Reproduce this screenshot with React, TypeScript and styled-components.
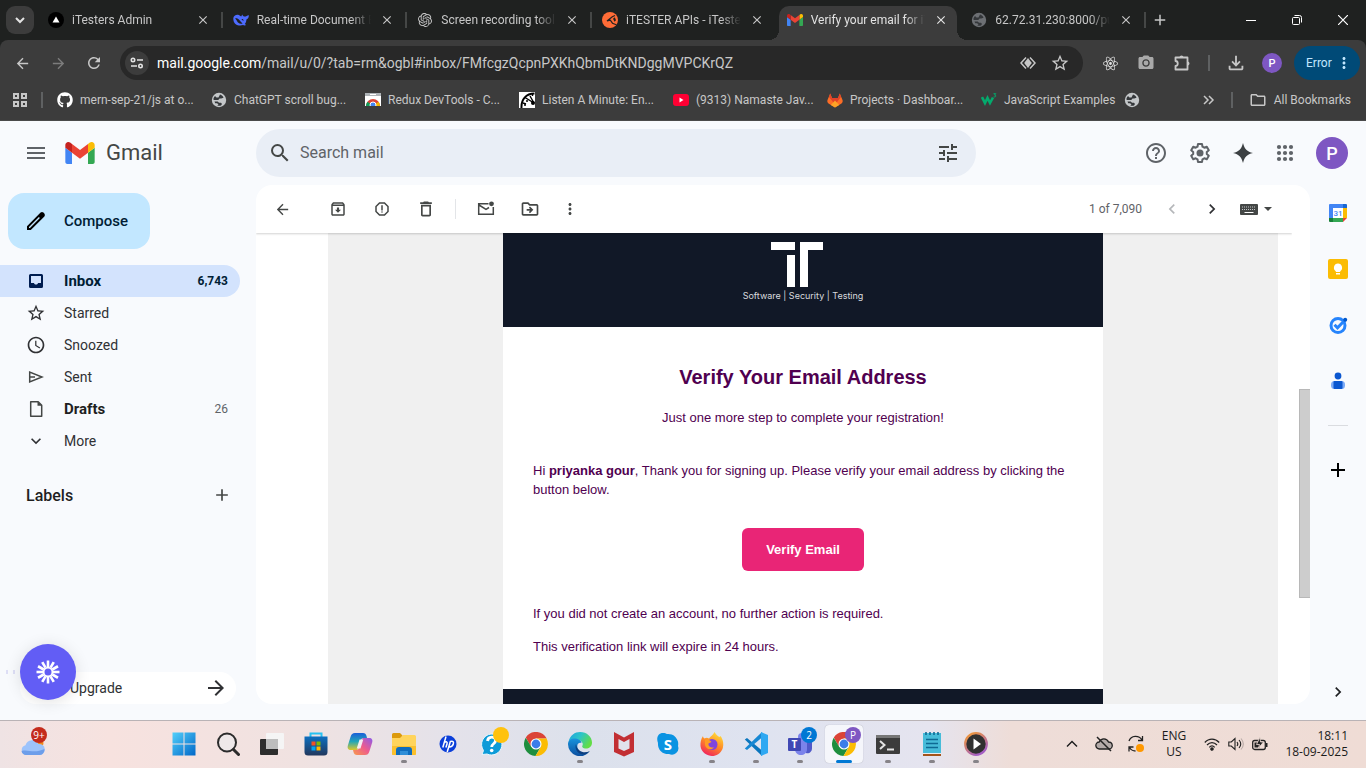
import React from 'react';
import styled, { createGlobalStyle, css } from 'styled-components';
import {
  MdAccessTime, MdAdd, MdArrowBack, MdArrowForward, MdChevronLeft,
  MdChevronRight, MdClose, MdDeleteOutline, MdExpandMore, MdHelpOutline,
  MdMenu, MdMoreVert, MdOutlineArchive, MdOutlineDriveFileMove, MdOutlineFileDownload,
  MdOutlineFolder, MdOutlineReport, MdRefresh, MdSearch,
  MdStarOutline, MdTune, MdPhotoCamera,
} from 'react-icons/md';
import { FaGithub } from 'react-icons/fa';
import { SiOpenai, SiReact } from 'react-icons/si';

const chromeFont = `Roboto, "Open Sans", sans-serif`;
const taskbarFont = `"Open Sans", "Noto Sans", sans-serif`;
const mailFont = `Roboto, Inter, sans-serif`;

const GlobalStyle = createGlobalStyle`
  * { box-sizing: border-box; }
  html, body { margin: 0; padding: 0; }
  body { font-family: ${mailFont}; overflow: hidden; }
  button { border: 0; padding: 0; margin: 0; background: none; font: inherit; color: inherit; cursor: pointer; }
  a { color: inherit; text-decoration: none; }
  svg { display: block; flex: none; }
`;

const Screen = styled.div`
  display: flex;
  flex-direction: column;
  height: 100vh;
`;

/* ---------- browser ---------- */

const Browser = styled.header`
  background: #1f2120;
  color: #c7c7c7;
  font-family: ${chromeFont};
  font-size: 12px;
  flex: none;
`;

const TabStrip = styled.div`
  display: flex;
  height: 40px;
  align-items: flex-start;
`;

const TabSearch = styled.button`
  display: grid;
  place-items: center;
  flex: none;
  width: 28px;
  height: 28px;
  margin: 6px;
  border-radius: 9px;
  background: #3c3c3c;
  color: #e3e3e3;
`;

const Tabs = styled.div`
  display: flex;
  gap: 6px;
  flex: 0 1 1102px;
  min-width: 0;
  height: 34px;
  margin-top: 6px;
`;

const TabBox = styled.div<{ $active?: boolean; $divider?: boolean }>`
  position: relative;
  display: flex;
  align-items: center;
  gap: 8px;
  flex: 1 1 0;
  min-width: 0;
  padding: 0 8px 6px;
  ${(p) => p.$divider && css`
    &::after {
      content: '';
      position: absolute;
      right: -4px;
      top: 6px;
      width: 2px;
      height: 16px;
      background: #454746;
    }
  `}
  ${(p) => p.$active && css`
    background: #3c3c3c;
    border-radius: 10px 10px 0 0;
    color: #e3e3e3;
    &::before, &::after {
      content: '';
      position: absolute;
      bottom: 0;
      width: 10px;
      height: 10px;
    }
    &::before { left: -10px; background: radial-gradient(circle at 0 0, transparent 10px, #3c3c3c 10px); }
    &::after { right: -10px; background: radial-gradient(circle at 100% 0, transparent 10px, #3c3c3c 10px); }
  `}
`;

const TabIcon = styled.span`
  display: grid;
  place-items: center;
  flex: none;
  width: 16px;
  height: 16px;
`;

const TabTitle = styled.span`
  flex: 1;
  min-width: 0;
  overflow: hidden;
  white-space: nowrap;
  line-height: 16px;
  mask-image: linear-gradient(to right, #000 calc(100% - 20px), transparent);
`;

const IconButton = styled.button<{ $w?: number; $h?: number }>`
  display: grid;
  place-items: center;
  flex: none;
  width: ${(p) => p.$w ?? 28}px;
  height: ${(p) => p.$h ?? 28}px;
`;

const WindowControls = styled.div`
  display: flex;
  margin-left: auto;
  color: #fff;
`;

const Toolbar = styled.div`
  background: #3c3c3c;
  border-radius: 8px 8px 0 0;
  border-bottom: 1px solid #4a4a4a;
`;

const AddressRow = styled.div`
  display: flex;
  align-items: center;
  gap: 8px;
  height: 46px;
  padding: 0 6px 0 8px;
`;

const AddressBar = styled.div`
  display: flex;
  align-items: center;
  flex: 1;
  min-width: 0;
  height: 34px;
  margin: 0 5px 0 4px;
  padding: 0 9px 0 5px;
  border-radius: 17px;
  background: #282828;
`;

const SiteInfo = styled.button`
  display: grid;
  place-items: center;
  width: 24px;
  height: 24px;
  border-radius: 50%;
  background: #3c3c3c;
  color: #e3e3e3;
`;

const Url = styled.a`
  flex: 1;
  min-width: 0;
  margin-left: 8px;
  overflow: hidden;
  white-space: nowrap;
  font-size: 14px;
  line-height: 20px;
  b { font-weight: 400; color: #fff; }
`;

const VRule = styled.span<{ $gap?: number }>`
  flex: none;
  width: 2px;
  height: 16px;
  margin: 0 ${(p) => p.$gap ?? 0}px;
  background: #5f6162;
`;

const Initial = styled.span<{ $size: number; $font: number }>`
  display: grid;
  place-items: center;
  width: ${(p) => p.$size}px;
  height: ${(p) => p.$size}px;
  border-radius: 50%;
  background: #7e57c2;
  color: #fff;
  font: 500 ${(p) => p.$font}px Roboto, sans-serif;
`;

const ErrorButton = styled.button`
  display: flex;
  align-items: center;
  justify-content: space-between;
  flex: none;
  width: 66px;
  height: 34px;
  padding: 0 7px 0 12px;
  border-radius: 17px;
  background: #004a77;
  color: #c2e7ff;
`;

const BookmarkRow = styled.nav`
  display: flex;
  align-items: center;
  height: 34px;
  padding: 0 15px 6px 13px;
`;

const BookmarkList = styled.div`
  display: flex;
  gap: 16px;
`;

const Bookmark = styled.a<{ $w?: number }>`
  display: flex;
  align-items: center;
  gap: 7px;
  width: ${(p) => (p.$w ? `${p.$w}px` : 'auto')};
  white-space: nowrap;
  line-height: 16px;
`;

const BookmarkEnd = styled.div`
  display: flex;
  align-items: center;
  gap: 16px;
  margin-left: auto;
`;

/* ---------- mail ---------- */

const Mail = styled.div`
  position: relative;
  display: flex;
  flex-direction: column;
  flex: 1;
  min-height: 0;
  background: #f8fafd;
  color: #444746;
`;

const MailHeader = styled.header`
  display: flex;
  align-items: center;
  flex: none;
  height: 64px;
  padding-right: 9px;
`;

const Brand = styled.div`
  display: flex;
  align-items: center;
  flex: none;
  width: 256px;
  padding-left: 22px;
`;

const Wordmark = styled.a`
  display: flex;
  align-items: center;
  gap: 11px;
  margin-left: 15px;
  font-size: 22px;
  line-height: 28px;
`;

const SearchBox = styled.form`
  display: flex;
  align-items: center;
  flex: 0 1 720px;
  height: 48px;
  padding: 0 14px 0 10px;
  border-radius: 24px;
  background: #e9eef6;
`;

const SearchInput = styled.input`
  flex: 1;
  min-width: 0;
  margin-left: 6px;
  padding: 0;
  border: 0;
  outline: 0;
  background: none;
  font: 400 16px/24px ${mailFont};
  &::placeholder { color: #5f6368; opacity: 1; }
`;

const HeaderActions = styled.div`
  display: flex;
  align-items: center;
  gap: 2px;
  margin-left: auto;
  color: #5f6368;
`;

const MailBody = styled.div`
  display: flex;
  flex: 1;
  min-height: 0;
  padding-bottom: 16px;
`;

const Sidebar = styled.aside`
  display: flex;
  flex-direction: column;
  flex: none;
  width: 256px;
  padding-top: 8px;
`;

const Compose = styled.button`
  display: flex;
  align-items: center;
  gap: 16px;
  width: 142px;
  height: 56px;
  margin: 0 0 16px 8px;
  padding-left: 16px;
  border-radius: 16px;
  background: #c2e7ff;
  color: #001d35;
  font-size: 15px;
  font-weight: 500;
`;

const Folder = styled.a<{ $active?: boolean; $bold?: boolean }>`
  display: flex;
  align-items: center;
  gap: 18px;
  width: 240px;
  height: 32px;
  padding: 0 12px 0 26px;
  border-radius: 0 16px 16px 0;
  background: ${(p) => (p.$active ? '#d3e3fd' : 'transparent')};
  color: ${(p) => (p.$active ? '#001d35' : p.$bold ? '#1f1f1f' : '#303134')};
  font-size: ${(p) => (p.$active || p.$bold ? 15 : 14)}px;
  font-weight: ${(p) => (p.$active || p.$bold ? 700 : 400)};
  line-height: 20px;
`;

const FolderName = styled.span`flex: 1;`;

const Count = styled.span<{ $strong?: boolean }>`
  font-size: 12px;
  font-weight: ${(p) => (p.$strong ? 700 : 400)};
  color: ${(p) => (p.$strong ? '#001d35' : '#5f6368')};
`;

const LabelsHead = styled.div`
  display: flex;
  align-items: center;
  justify-content: space-between;
  width: 240px;
  height: 40px;
  margin-top: 18px;
  padding: 0 8px 0 26px;
  h2 { margin: 0; color: #1f1f1f; font-size: 16px; font-weight: 500; }
`;

const Upgrade = styled.button`
  display: flex;
  align-items: center;
  justify-content: space-between;
  width: 216px;
  height: 32px;
  margin: auto 0 0 20px;
  padding: 0 8px 0 50px;
  border-radius: 16px;
  background: #fff;
  color: #303134;
  font-size: 14px;
`;

const Recorder = styled.button`
  position: absolute;
  left: 20px;
  bottom: 20px;
  display: grid;
  place-items: center;
  width: 56px;
  height: 56px;
  border-radius: 50%;
  background: #625df5;
  color: #fff;
  box-shadow: 0 2px 16px rgba(0, 0, 0, 0.12);
`;

const Grip = styled.div`
  position: absolute;
  left: 6px;
  bottom: 46px;
  display: flex;
  gap: 5px;
  i { width: 2px; height: 4px; background: #dedff6; }
`;

const Conversation = styled.main`
  display: flex;
  flex-direction: column;
  flex: 1;
  min-width: 0;
  overflow: hidden;
  border-radius: 16px;
  background: #fff;
`;

const MessageBar = styled.div`
  display: flex;
  align-items: center;
  flex: none;
  height: 48px;
  margin-right: 18px;
  padding: 0 20px 0 12px;
  box-shadow: 0 1px 2px rgba(0, 0, 0, 0.18);
  clip-path: inset(0 0 -4px 0);
  z-index: 1;
`;

const ActionGroup = styled.div<{ $ml?: number }>`
  display: flex;
  gap: 16px;
  margin-left: ${(p) => p.$ml ?? 0}px;
`;

const BarRule = styled.span`
  width: 1px;
  height: 20px;
  margin-left: 15px;
  background: #e3e5e8;
`;

const Pager = styled.div`
  display: flex;
  align-items: center;
  margin-left: auto;
  color: #5f6368;
  font-size: 12px;
`;

const InputTools = styled.button`
  display: flex;
  align-items: center;
  gap: 6px;
  height: 28px;
  margin-left: 14px;
  color: #444746;
`;

const MessagePane = styled.div`
  display: flex;
  flex: 1;
  min-height: 0;
  padding-left: 72px;
`;

const MessageCanvas = styled.div`
  display: flex;
  justify-content: center;
  flex: 1;
  min-width: 0;
  overflow: hidden;
  background: #f0f0f0;
`;

const ScrollTrack = styled.div`
  display: flex;
  justify-content: flex-end;
  width: 32px;
  padding-top: 156px;
`;

const ScrollThumb = styled.div`
  width: 11px;
  height: 209px;
  border: 1px solid #b8b8b8;
  border-right: 0;
  background: #cdcdcd;
`;

const Letter = styled.article`
  display: flex;
  flex-direction: column;
  width: 600px;
  background: #fff;
  color: #500050;
  font: 13px/19px "Liberation Sans", Arial, sans-serif;
`;

const Banner = styled.div`
  display: flex;
  flex-direction: column;
  align-items: center;
  flex: none;
  height: 94px;
  padding-top: 8px;
  background: #111827;
  color: #d8dade;
  font: 9px/14px Inter, sans-serif;
  svg { margin: 0 12px 2px 0; }
`;

const LetterBody = styled.div`
  flex: none;
  height: 362px;
  padding: 38px 30px 0;
  h1 { margin: 0 0 19px; font-size: 20px; line-height: 24px; text-align: center; }
  p { margin: 0 0 14px; }
`;

const Lead = styled.p`text-align: center;`;

const Greeting = styled.p`padding-top: 20px;`;

const VerifyLink = styled.a`
  display: block;
  width: 122px;
  margin: 29px auto 33px;
  padding: 12px 0;
  border-radius: 6px;
  background: #e92576;
  color: #fff;
  font-weight: 700;
  text-align: center;
`;

const LetterFooter = styled.div`
  flex: 1 0 200px;
  background: #111827;
`;

const AddonRail = styled.aside`
  display: flex;
  flex-direction: column;
  align-items: center;
  flex: none;
  width: 56px;
`;

const RailRule = styled.span`
  width: 20px;
  height: 1px;
  margin: 16px 0;
  background: #dadce0;
`;

const AddonButton = styled(IconButton)`
  width: 56px;
  height: 56px;
`;

const RailToggle = styled(IconButton)`
  height: 24px;
  margin-top: auto;
  color: #202124;
`;

/* ---------- task bar ---------- */

const Taskbar = styled.footer`
  display: flex;
  align-items: center;
  flex: none;
  height: 48px;
  padding-bottom: 2px;
  border-top: 1px solid #b9b3b6;
  background: linear-gradient(90deg, #efe3e4 0, #f7e2df 8%, #f0e2e1 22%, #e4e2ea 33%, #dce1ec 43%, #dfe3f0 56%, #e5e4ef 68%, #eeddd8 74%, #efdcd5 100%);
  color: #1b1b1b;
  font-family: ${taskbarFont};
  font-size: 12px;
  line-height: 16px;
`;

const Widgets = styled.div`
  flex: none;
  width: 162px;
  padding-left: 19px;
`;

const Apps = styled.div`
  display: flex;
  flex: none;
`;

const AppButton = styled.button<{ $state?: 'open' | 'active' }>`
  position: relative;
  display: grid;
  place-items: center;
  width: 44px;
  height: 45px;
  svg { position: relative; }
  ${(p) => p.$state === 'active' && css`
    &::before {
      content: '';
      position: absolute;
      inset: 4px 3px 3px;
      border-radius: 4px;
      background: #f5f6fb;
      box-shadow: 0 0 1px rgba(0, 0, 0, 0.3);
    }
  `}
  ${(p) => p.$state && css`
    &::after {
      content: '';
      position: absolute;
      bottom: 3px;
      left: 50%;
      width: ${p.$state === 'active' ? 16 : 6}px;
      height: 3px;
      border-radius: 2px;
      transform: translateX(-50%);
      background: ${p.$state === 'active' ? '#0078d4' : '#868388'};
    }
  `}
`;

const Badge = styled.span<{ $bg: string; $right?: number }>`
  position: absolute;
  top: 6px;
  right: ${(p) => p.$right ?? 5}px;
  display: grid;
  place-items: center;
  width: 16px;
  height: 16px;
  border-radius: 50%;
  background: ${(p) => p.$bg};
  color: #fff;
  font-size: 10px;
  line-height: 16px;
`;

const Weather = styled.button`
  position: relative;
  display: grid;
  place-items: center;
  width: 28px;
  height: 45px;
`;

const Tray = styled.div`
  display: flex;
  align-items: center;
  margin-left: auto;
  padding-right: 18px;
`;

const TrayText = styled.span<{ $align: string; $w: number }>`
  width: ${(p) => p.$w}px;
  text-align: ${(p) => p.$align};
`;

/* ---------- drawings ---------- */

const GmailMark = ({ w, h }: { w: number; h: number }) => (
  <svg width={w} height={h} viewBox="52 42 88 66" aria-hidden="true">
    <path fill="#4285f4" d="M58 108h14V74L52 59v43c0 3.320 2.690 6 6 6" />
    <path fill="#34a853" d="M120 108h14c3.320 0 6-2.690 6-6V59l-20 15" />
    <path fill="#fbbc04" d="M120 48v26l20-15v-8c0-7.420-8.470-11.650-14.400-7.200" />
    <path fill="#ea4335" d="M72 74V48l24 18 24-18v26L96 92" />
    <path fill="#c5221f" d="M52 51v8l20 15V48l-5.600-4.200c-5.940-4.450-14.400-.22-14.400 7.200" />
  </svg>
);

const Globe = ({ dim }: { dim?: boolean }) => (
  <svg width="16" height="16" viewBox="0 0 16 16" aria-hidden="true">
    <circle cx="8" cy="8" r="7.200" fill={dim ? '#6d7074' : '#c4c7c9'} />
    <path fill="#34373a" d="M9 2.500c1.700.4 3 1.600 3.500 3.200L10.200 6.500H8.500L7.300 8H3L2.300 7.200A6 6 0 0 1 4 4l1.500 1.500h2zM3.500 9.500h3.200l1.300 1.300h2l1 1.200-1 1.600c-1.300.4-2.700.3-3.700-.1l1.200-1.200-1.500-1H4.200z" />
  </svg>
);

const AppsMark = () => (
  <svg width="14" height="14" viewBox="0 0 14 14" fill="none" stroke="#c7c7c7" strokeWidth="2" aria-hidden="true">
    <path d="M1 1h4v4H1zM9 1h4v4H9zM1 9h4v4H1zM9 9h4v4H9z" />
  </svg>
);

const GridDots = () => (
  <svg width="18" height="18" viewBox="0 0 18 18" fill="#5f6368" aria-hidden="true">
    {[3, 9, 15].map((y) => [3, 9, 15].map((x) => <circle key={`${x}-${y}`} cx={x} cy={y} r="2.100" />))}
  </svg>
);

const VercelMark = () => (
  <svg width="16" height="16" viewBox="0 0 16 16" aria-hidden="true">
    <circle cx="8" cy="8" r="8" fill="#000" />
    <path d="M8 4.500 11.500 10.500h-7z" fill="#fff" />
  </svg>
);

const WhaleMark = () => (
  <svg width="16" height="16" viewBox="0 0 16 16" aria-hidden="true">
    <path fill="#4d6bfe" d="M.3 6.200C.6 3.900 2.700 2.400 5 2.700c1.300.2 2.100 1 3.200 1.900.5-.5.500-1.700 1.200-2.100.2 1.100.7 1.900 1.800 2 1.700.1 2.900-.6 4.500-1.500.3 2.200-.4 3.800-2.300 4.500-.1 2.100-.7 3.500-1.700 4.600l1.500 1c-1.300.6-2.300.4-3.200 0C6.300 14.500.1 13 .3 6.200" />
    <path fill="#1f2120" d="M2 6.400c1.500-.6 3 .1 4.400 1.600 1.500 1.700 2 2.700 3.200 3.500-3.300.9-4.900-1.200-5.600-2.600-.5-1-1-1.700-2-2.500M8.600 7.200c1-.4 1.900.3 2.100 1.600-.9-.3-1.700-.6-2.100-1.600" />
  </svg>
);

const PostmanMark = () => (
  <svg width="16" height="16" viewBox="0 0 16 16" aria-hidden="true">
    <circle cx="8" cy="8" r="8" fill="#ff6c37" />
    <path d="M13 3.500 10.300 4.800 5 9l3.300-.8 2.200 3 3.800 1.600" fill="none" stroke="#222" strokeWidth="1.200" />
    <path d="m11 6.800 1.800-1.500 1.200 3-1.500 1.500z" fill="#1f2120" />
  </svg>
);

const StoreMark = () => (
  <svg width="16" height="16" viewBox="0 0 16 16" aria-hidden="true">
    <path fill="#fff" d="M0 1h16v13H0z" />
    <path fill="#aeb3b7" d="M0 1h16v3H0z" />
    <path fill="#fff" d="M5 2h6v1H5z" />
    <path fill="#db4437" d="M1 14a7 7 0 0 1 14 0z" />
    <path fill="#f4b400" d="M8 14h7a7 7 0 0 0-1.500-4.300z" />
    <path fill="#0f9d58" d="M1 14h7L2.500 9.700A7 7 0 0 0 1 14" />
    <circle cx="8" cy="13" r="3" fill="#4285f4" stroke="#fff" />
    <path fill="#3c3c3c" d="M0 14h16v2H0z" />
  </svg>
);

const ClockFaceMark = () => (
  <svg width="16" height="16" viewBox="0 0 16 16" aria-hidden="true">
    <path fill="#fff" d="M0 0h16v16H0z" />
    <path d="M15.500 1.500C7 1.500 2 7.500 2.500 16" fill="none" stroke="#000" strokeWidth="2" />
    <path d="M15 11 6 5.500M15 11l-4-7M4 11l3 1M13.500 2v2" stroke="#000" strokeWidth="1.400" />
    <circle cx="6" cy="13" r="1" /><circle cx="8" cy="9" r="1" /><circle cx="14" cy="11" r="2" />
  </svg>
);

const YoutubeMark = () => (
  <svg width="16" height="16" viewBox="0 0 16 16" aria-hidden="true">
    <rect y="2" width="16" height="12" rx="3" fill="#f03" />
    <path d="m6.500 5.500 4 2.500-4 2.500z" fill="#fff" />
  </svg>
);

const GitlabMark = () => (
  <svg width="16" height="16" viewBox="0 0 16 16" aria-hidden="true">
    <path fill="#fc6d26" d="M3.200 1.500 5 6h6l1.800-4.500L15.500 8c.5 1.500 0 2.700-1 3.500L8 15.500 1.500 11.500C.5 10.700 0 9.500.5 8z" />
    <path fill="#e24329" d="M3.200 1.500 5 6h6l1.800-4.500L14 5 8 12.500 2 5z" />
    <path fill="#fca326" d="m8 8.500 4.200 4.400L8 15.500l-4.200-2.600z" />
  </svg>
);

const W3Mark = () => (
  <svg width="16" height="16" viewBox="0 0 16 16" fill="none" stroke="#04aa6d" aria-hidden="true">
    <path d="m1 5 3 6L6.500 6 9 11l3-5.500" strokeWidth="2.600" />
    <path d="M12.500 1.700h2.300L13.500 3c2 0 1.800 2.500-.8 1.800" strokeWidth="1" />
  </svg>
);

const SiteSettings = () => (
  <svg width="14" height="14" viewBox="0 0 14 14" fill="none" stroke="currentColor" strokeWidth="1.600" aria-hidden="true">
    <circle cx="3" cy="4" r="1.700" /><path d="M7 4h6M1 10h6" /><circle cx="10.500" cy="10" r="1.700" />
  </svg>
);

const LensMark = () => (
  <svg width="16" height="16" viewBox="0 0 16 16" aria-hidden="true">
    <path d="M6 2.500 1 8l5 5.500M10 2.500 15 8l-5 5.500" fill="none" stroke="#c7c7c7" strokeWidth="1.500" />
    <path d="m8 3 3.800 5L8 13 4.200 8z" fill="#c7c7c7" />
  </svg>
);

const PuzzleMark = () => (
  <svg width="18" height="18" viewBox="0 0 18 18" aria-hidden="true">
    <path d="M2.500 3.500h12v12h-12v-3.500c3 0 3-5 0-5z" fill="none" stroke="#c7c7c7" strokeWidth="1.800" strokeLinejoin="round" />
    <path d="M6.500 3.500a2 2 0 0 1 4 0M14.500 7.500a2 2 0 0 1 0 4" fill="#c7c7c7" />
  </svg>
);

const Sparkle = () => (
  <svg width="20" height="20" viewBox="0 0 20 20" aria-hidden="true">
    <path fill="#3c4043" d="M10 0c1.500 6 4 8.500 10 10-6 1.500-8.500 4-10 10-1.500-6-4-8.500-10-10 6-1.500 8.500-4 10-10" />
  </svg>
);

const Gear = () => (
  <svg width="24" height="24" viewBox="0 0 24 24" aria-hidden="true">
    <path fill="none" stroke="#5f6368" strokeWidth="2" strokeLinejoin="round" d="M10 3h4l.5 2.700 1.800 1 2.500-1 2 3.500-2 1.700v2.200l2 1.700-2 3.500-2.500-1-1.800 1L14 21h-4l-.5-2.700-1.800-1-2.500 1-2-3.500 2-1.700v-2.200l-2-1.700 2-3.500 2.500 1 1.800-1z" />
    <circle cx="12" cy="12" r="3.500" fill="#5f6368" />
  </svg>
);

const Pencil = () => (
  <svg width="24" height="24" viewBox="0 0 24 24" aria-hidden="true">
    <path fill="#000" d="M20.400 4.800a2 2 0 0 0 0-.2l-1-1a2 2 0 0 0-2.800 0L3 17.200V21h3.800L20.400 7.400a2 2 0 0 0 0-2.600M6 19H5v-1L14.900 8.100l1 1z" />
  </svg>
);

const InboxMark = () => (
  <svg width="20" height="20" viewBox="0 0 20 20" aria-hidden="true">
    <path fill="#001d50" fillRule="evenodd" d="M4.500 3h11A1.500 1.500 0 0 1 17 4.500v11a1.500 1.500 0 0 1-1.500 1.500h-11A1.500 1.500 0 0 1 3 15.500v-11A1.500 1.500 0 0 1 4.500 3M5 5v7h3c.5 2 3.500 2 4 0h3V5z" />
  </svg>
);

const SentMark = () => (
  <svg width="20" height="20" viewBox="0 0 20 20" fill="none" stroke="#444746" strokeWidth="1.500" aria-hidden="true">
    <path d="M3.700 5v10L16 10zM4 10h5" />
  </svg>
);

const DraftMark = () => (
  <svg width="20" height="20" viewBox="0 0 20 20" aria-hidden="true">
    <path d="M5.500 2.700h6.700l3.500 3.500v11.100H4.700V2.700z" fill="none" stroke="#444746" strokeWidth="1.500" strokeLinejoin="round" />
    <path d="M11.500 2.500v4.300H16z" fill="#444746" />
  </svg>
);

const UnreadMark = () => (
  <svg width="20" height="20" viewBox="0 0 20 20" aria-hidden="true">
    <path d="M12.500 4.700H2.700v10.600h14.600V8M3 6l7 4.300L13 8.500" fill="none" stroke="#444746" strokeWidth="1.500" />
    <circle cx="15.500" cy="4.800" r="2.400" fill="#444746" />
  </svg>
);

const KeyboardMark = () => (
  <svg width="18" height="12" viewBox="0 0 18 12" aria-hidden="true">
    <rect y="1" width="18" height="11" rx="1" fill="#444746" />
    <path d="M2 4h14M2 6.500h14" stroke="#c3c5c7" strokeWidth="1" strokeDasharray="1 1" /><path d="M4.500 9.500h9" stroke="#fff" />
  </svg>
);

const DropMark = () => (
  <svg width="8" height="4" viewBox="0 0 8 4" aria-hidden="true"><path d="M0 0h8L4 4z" fill="#444746" /></svg>
);

const Burst = () => (
  <svg width="24" height="24" viewBox="-12 -12 24 24" stroke="#fff" strokeWidth="2.600" aria-hidden="true">
    {[0, 30, 60, 90, 120, 150, 180, 210, 240, 270, 300, 330].map((a) => (
      <path key={a} d="M0-5V-11.500" transform={`rotate(${a})`} />
    ))}
    <circle r="4.400" fill="none" strokeWidth="1.800" />
  </svg>
);

const CompanyMark = () => (
  <svg width="52" height="46" viewBox="0 0 52 46" role="img" aria-label="iT">
    <path fill="#fff" d="M0 1h24v8H0zM16 14h8v32h-8zM29 1h23v8H37v37h-8z" />
  </svg>
);

const CalendarMark = () => (
  <svg width="20" height="20" viewBox="0 0 20 20" role="img" aria-label="Calendar">
    <path fill="#4285f4" d="M2 1h13v4H5v10H1V2a1 1 0 0 1 1-1" />
    <path fill="#1967d2" d="M15 1h3a1 1 0 0 1 1 1v3h-4z" />
    <path fill="#fbbc04" d="M15 5h4v10h-4z" />
    <path fill="#34a853" d="M5 15h10v4H5z" />
    <path fill="#188038" d="M1 15h4v4H2a1 1 0 0 1-1-1z" />
    <path fill="#ea4335" d="M15 15h4l-4 4z" />
    <path fill="#fff" d="M5 5h10v10H5z" />
    <text x="10" y="13" textAnchor="middle" fontFamily="Roboto" fontSize="8" fontWeight="500" fill="#4285f4">31</text>
  </svg>
);

const KeepMark = () => (
  <svg width="20" height="20" viewBox="0 0 20 20" aria-hidden="true">
    <rect width="20" height="20" rx="2" fill="#fbbc04" />
    <path fill="#fff" d="M10 4.500a4.200 4.200 0 0 0-2.200 7.700V13h4.400v-.8A4.200 4.200 0 0 0 10 4.500M8 14h4v1.500H8z" />
  </svg>
);

const TasksMark = () => (
  <svg width="20" height="20" viewBox="0 0 20 20" fill="none" aria-hidden="true">
    <circle cx="10" cy="10.500" r="7" stroke="#2684fc" strokeWidth="3" />
    <path d="m6.500 9.800 3 3 7.500-7.800" stroke="#2684fc" strokeWidth="3" />
    <circle cx="17.200" cy="4.800" r="2" fill="#0057cc" />
  </svg>
);

const ContactsMark = () => (
  <svg width="20" height="20" viewBox="0 0 20 20" aria-hidden="true">
    <rect x="3" y="10" width="14" height="8" rx="3.500" fill="#7baaf7" />
    <rect x="5.500" y="10" width="9" height="8" rx="1" fill="#0b57d0" />
    <circle cx="10" cy="5" r="3.400" fill="#0b57d0" />
  </svg>
);

const WeatherMark = () => (
  <svg width="26" height="26" viewBox="0 0 26 26" aria-hidden="true">
    <circle cx="18" cy="12" r="5.500" fill="#f28a1d" />
    <path d="M6 24a5 5 0 0 1-.5-9.800A7 7 0 0 1 18.500 13 5.500 5.500 0 0 1 20 24z" fill="#9dc3fb" />
    <path d="M6 24a5 5 0 0 1-4.500-4C8 18 14 23 24.500 18A5.500 5.500 0 0 1 20 24z" fill="#6d9eea" />
  </svg>
);

const WindowsMark = () => (
  <svg width="24" height="24" viewBox="0 0 24 24" aria-hidden="true">
    <defs><linearGradient id="win" x1="0" y1="0" x2="1" y2="1"><stop stopColor="#52d0fb" /><stop offset="1" stopColor="#0067c8" /></linearGradient></defs>
    <path fill="url(#win)" d="M.5.500h11v11H.5zM12.500.500h11v11h-11zM.5 12.500h11v11H.5zM12.500 12.500h11v11h-11z" />
  </svg>
);

const TaskSearch = () => (
  <svg width="24" height="24" viewBox="0 0 24 24" fill="none" stroke="#2b2b2b" aria-hidden="true">
    <circle cx="11" cy="10.500" r="9" strokeWidth="2" fill="#eee8e9" /><path d="m17.500 17.500 5 5" strokeWidth="3" strokeLinecap="round" />
  </svg>
);

const TaskView = () => (
  <svg width="24" height="24" viewBox="0 0 24 24" aria-hidden="true">
    <rect x="0" y="7" width="18" height="16" rx="1" fill="#2d2d2d" />
    <rect x="6" y="1" width="18" height="16" rx="1" fill="#f5f5f5" />
    <path fill="#bdbdbd" d="M6 7h12v10H6z" />
  </svg>
);

const StoreBag = () => (
  <svg width="24" height="24" viewBox="0 0 24 24" aria-hidden="true">
    <defs><linearGradient id="bag" x1="0" y1="0" x2="0" y2="1"><stop stopColor="#0c6fc0" /><stop offset="1" stopColor="#22375c" /></linearGradient></defs>
    <path d="M6.500 6V1.500h11V6" fill="none" stroke="#27c2f1" strokeWidth="2" />
    <path fill="url(#bag)" d="M.5 4.500h23V20a3.500 3.500 0 0 1-3.500 3.500H4A3.500 3.500 0 0 1 .5 20z" />
    <path fill="#f25022" d="M7.500 9.500h4v4h-4z" /><path fill="#7fba00" d="M12.500 9.500h4v4h-4z" />
    <path fill="#00a4ef" d="M7.500 14.500h4v4h-4z" /><path fill="#ffb900" d="M12.500 14.500h4v4h-4z" />
  </svg>
);

const CopilotMark = () => (
  <svg width="26" height="24" viewBox="0 0 26 24" aria-hidden="true">
    <defs>
      <linearGradient id="cpa" x1="0" y1="0" x2="0" y2="1"><stop stopColor="#1a5fd8" /><stop offset=".5" stopColor="#22a6b8" /><stop offset="1" stopColor="#dfc72a" /></linearGradient>
      <linearGradient id="cpb" x1="1" y1="0" x2="0" y2="1"><stop stopColor="#8c5bea" /><stop offset=".5" stopColor="#ee5b8d" /><stop offset="1" stopColor="#f79b4a" /></linearGradient>
    </defs>
    <path fill="url(#cpa)" d="M8 1h8c2 0 3 1 3.500 3l.5 2h-3c-2 0-3 1-3.500 3l-2 7c-.5 1.500-1 2-2.500 2H4c-3 0-4-2-3-5l2.500-8C4.500 2 5.500 1 8 1" />
    <path fill="url(#cpb)" d="M18 23h-8c-2 0-3-1-3.500-3L6 18h3c2 0 3-1 3.500-3l2-7c.5-1.500 1-2 2.500-2h5c3 0 4 2 3 5l-2.500 8c-1 3-2 4-4.500 4" />
    <path fill="#f3eef2" d="m12.500 7.500-2.800 9h3.800l2.800-9z" />
  </svg>
);

const ExplorerMark = () => (
  <svg width="24" height="24" viewBox="0 0 24 24" aria-hidden="true">
    <path fill="#dc9a0c" d="M0 2.500A1.500 1.500 0 0 1 1.500 1H8l2.500 2.500V8H0z" />
    <path fill="#ffd45c" d="M0 6h8l3-3h11.500A1.500 1.500 0 0 1 24 4.500V22a1 1 0 0 1-1 1H1a1 1 0 0 1-1-1z" />
    <path fill="#fbc02d" d="M0 14h24v8a1 1 0 0 1-1 1H1a1 1 0 0 1-1-1z" />
    <path fill="#0f6cbd" d="M4 18a3 3 0 0 1 3-3h10a3 3 0 0 1 3 3v5h-4v-3H8v3H4z" /><path fill="#2f8ed8" d="M8 19h8v4H8z" />
  </svg>
);

const HpMark = () => (
  <svg width="18" height="18" viewBox="0 0 18 18" role="img" aria-label="hp">
    <circle cx="9" cy="9" r="8.500" fill="#0b3fd9" />
    <path d="M7 1.500 3.800 12.500M5.300 7.500c2-1.500 3.400-.8 2.700 1.500l-1.100 3.500M11.500 6l-3.300 11M11.300 6.500c3-.8 3.600.5 3 2.500-.6 2.200-1.800 3.200-4.700 2.900" fill="none" stroke="#fff" strokeWidth="1.500" />
  </svg>
);

const HelpMark = () => (
  <svg width="26" height="26" viewBox="0 0 26 26" aria-hidden="true">
    <path d="M12 3a10.500 10.500 0 1 1-4 20l-5 .5 1.500-4A10.500 10.500 0 0 1 12 3" fill="#0c9bd8" stroke="#e9f6fc" />
    <path d="M8.500 10c.5-5 8-5 8-.5 0 3.500-3.800 3-3.800 6.500" fill="none" stroke="#fff" strokeWidth="2.800" /><circle cx="12.700" cy="19.500" r="1.800" fill="#fff" />
  </svg>
);

const ChromeMark = () => (
  <svg width="24" height="24" viewBox="0 0 24 24" aria-hidden="true">
    <path fill="#db4437" d="M12 6.500h10.700A12 12 0 0 0 1.800 5.600l5 9z" />
    <path fill="#1e8e3e" d="M1.700 5.800A12 12 0 0 0 11.500 24l5.300-9.200H7.200z" />
    <path fill="#fbbc04" d="M22.600 6.500H12l5 8.300L11.500 24A12 12 0 0 0 22.600 6.500" />
    <circle cx="12" cy="12" r="5.500" fill="#fff" /><circle cx="12" cy="12" r="4.400" fill="#3b7de9" />
  </svg>
);

const EdgeMark = () => (
  <svg width="24" height="24" viewBox="0 0 24 24" aria-hidden="true">
    <defs>
      <linearGradient id="eda" x1="0" y1="0" x2="1" y2=".5"><stop stopColor="#1da1e0" /><stop offset=".5" stopColor="#2cc5c8" /><stop offset="1" stopColor="#62dd45" /></linearGradient>
      <linearGradient id="edb" x1="0" y1="0" x2="0" y2="1"><stop stopColor="#1a93dc" /><stop offset="1" stopColor="#0b4fa0" /></linearGradient>
    </defs>
    <path fill="url(#eda)" d="M.5 10C2 3 7 0 12 0c7 0 12 5 12 10.500 0 4-3 6-6 6s-4.500-1.500-3.500-3c1-2-.5-4.500-3.500-5.500C7 7 3 7.500.5 10" />
    <path fill="url(#edb)" d="M0 12c0-4 4-6 8-5.500 3.500.5 5.500 2.500 5.500 4.500-4-1-5.500 3-3 7 2 3 6 4 11 1.500A12 12 0 0 1 0 12" />
    <path fill="#0c3f80" d="M8 12c-2 6 3 11 9 10.500 2-.8 3.500-2 5-3.500-4 2-8 1.500-10.500-.5S8.500 15 8 12" />
  </svg>
);

const ShieldMark = () => (
  <svg width="24" height="26" viewBox="0 0 24 26" aria-hidden="true">
    <path fill="#c22f33" d="m2 1 10 5.500L22 1v20l-10 4.500L2 21z" /><path fill="#e1e3ec" d="m6.500 8 5.500 3 5.500-3v9.500L12 20l-5.500-2.500z" />
  </svg>
);

const SkypeMark = () => (
  <svg width="24" height="24" viewBox="0 0 24 24" role="img" aria-label="Skype">
    <path fill="#0a93e2" d="M7 1c2 0 3 .5 4 1a10 10 0 0 1 11 12 6.500 6.500 0 0 1-9 8A10 10 0 0 1 2 11C0 6 2 1 7 1" />
    <text x="12" y="17.500" textAnchor="middle" fontFamily="Open Sans" fontWeight="700" fontSize="15" fill="#fff">S</text>
  </svg>
);

const FirefoxMark = () => (
  <svg width="24" height="26" viewBox="0 0 24 26" aria-hidden="true">
    <defs><linearGradient id="ff" x1=".8" y1="0" x2=".3" y2="1"><stop stopColor="#ffe63f" /><stop offset=".5" stopColor="#ff8b25" /><stop offset="1" stopColor="#f0215f" /></linearGradient></defs>
    <path fill="url(#ff)" d="M3 5c0 1 .5 2 1.500 2.500 1.500-1 3-1 4.500 0C11 5 13 4 14.500 1c2 3 3 4 5 5l1-1c3 4 3.500 9 2 13-2 4.500-6 7-10.500 7S1 21.500.5 15C.3 11 1 8 3 5" />
    <circle cx="12" cy="13.500" r="5.500" fill="#7f45dd" /><path fill="#ff9b25" d="M5 9c3-1 5 0 6.500 2l-3 1.500c-.5 3 2.500 4.500 5.500 4-3 3.500-9 1.500-9-3.500z" />
  </svg>
);

const VsCodeMark = () => (
  <svg width="24" height="24" viewBox="0 0 24 24" aria-hidden="true">
    <path fill="#0a75bd" d="M.8 7.500 3 6l15 12.500V24z" /><path fill="#1888d3" d="M.8 16.500 3 18 18 5.500V0z" />
    <path fill="#2fa8f2" d="m17 0 7 3v18l-7 3z" />
  </svg>
);

const TeamsMark = () => (
  <svg width="26" height="24" viewBox="0 0 26 24" role="img" aria-label="Teams">
    <circle cx="15" cy="5" r="4" fill="#7b83eb" /><path fill="#5059c9" d="M17 9h8v7c0 4-3 6-6 5z" /><path fill="#7b83eb" d="M8 9h12v8c0 4-3 6-6 6s-6-2-6-6z" />
    <rect x="1" y="6" width="13" height="13" rx="1" fill="#4048b4" />
    <text x="7.500" y="16" textAnchor="middle" fontFamily="Open Sans" fontWeight="700" fontSize="10" fill="#fff">T</text>
  </svg>
);

const TerminalMark = () => (
  <svg width="24" height="20" viewBox="0 0 24 20" aria-hidden="true">
    <rect width="24" height="19" y="1" rx="1" fill="#3c3c3c" /><path fill="#777" d="M0 1h24v3H0z" /><path d="m4 7 4.500 4L4 15M11 15.500h7" fill="none" stroke="#e4e4e4" strokeWidth="2" />
  </svg>
);

const NotepadMark = () => (
  <svg width="20" height="26" viewBox="0 0 20 26" aria-hidden="true">
    <path fill="#47bcd9" d="M1 2h18v20H1z" /><path fill="#e8eef2" d="M1 22h18v1H1z" /><path fill="#a4541b" d="M1 23h18v2H1z" />
    <path d="M4 8.500h12M4 12.500h12M4 16.500h12M4 1v3M8 1v3M12 1v3M16 1v3" stroke="#0e6a94" strokeWidth="1.600" />
  </svg>
);

const PlayerMark = () => (
  <svg width="24" height="24" viewBox="0 0 24 24" aria-hidden="true">
    <defs><linearGradient id="pl" x1="0" y1="0" x2=".6" y2="1"><stop stopColor="#f59b2c" /><stop offset="1" stopColor="#a45fc4" /></linearGradient></defs>
    <circle cx="12" cy="12" r="10.800" fill="#303030" stroke="url(#pl)" strokeWidth="2.200" /><path fill="#fff" d="m9.500 6.500 7.500 5.500-7.500 5.500z" />
  </svg>
);

const CloudOff = () => (
  <svg width="18" height="16" viewBox="0 0 18 16" aria-hidden="true">
    <path d="M4.500 13a3.500 3.500 0 0 1-.3-7A5 5 0 0 1 13.500 6a3.500 3.500 0 0 1 .5 7z" fill="#b3aaa8" stroke="#222" strokeWidth="1.300" /><path d="m2 1 14 14" stroke="#222" strokeWidth="1.500" />
  </svg>
);

const SyncMark = () => (
  <svg width="18" height="18" viewBox="0 0 18 18" fill="none" stroke="#222" strokeWidth="1.300" aria-hidden="true">
    <path d="M2 6C4 0 12 0 15 5M15.500 1v4.500H11M2 16.500V12h4.500M2.500 12.500C4 15 6 16 8.500 16" /><circle cx="13" cy="13" r="4" fill="#ff9800" stroke="none" />
  </svg>
);

const WifiMark = () => (
  <svg width="16" height="14" viewBox="0 0 16 14" fill="none" stroke="#222" strokeWidth="1.200" aria-hidden="true">
    <path d="M.8 5.500c4-4.500 10.400-4.500 14.400 0M3 8c3-3.300 7-3.300 10 0M5.300 10.300c1.600-1.800 3.800-1.800 5.400 0" /><circle cx="8" cy="12" r="1.200" fill="#222" />
  </svg>
);

const SpeakerMark = () => (
  <svg width="16" height="14" viewBox="0 0 16 14" fill="none" stroke="#222" strokeWidth="1.100" aria-hidden="true">
    <path d="M.8 5h2.500L7 1.500v11L3.300 9H.8zM9 5c1 1.200 1 2.800 0 4M11 3c2.200 2.500 2.200 5.500 0 8" /><path d="M13 1.500c3 3.500 3 7.500 0 11" stroke="#b9aba7" />
  </svg>
);

const BatteryMark = () => (
  <svg width="16" height="14" viewBox="0 0 16 14" aria-hidden="true">
    <rect x=".7" y="3.500" width="12.600" height="9" rx="2" fill="none" stroke="#222" strokeWidth="1.300" /><path fill="#222" d="M2.500 5.500h5v5h-5zM14 6h1.500v4H14z" />
    <path fill="#222" stroke="#efdcd5" strokeWidth=".8" d="M8 0 4.500 7.500h3L6.500 11l5-6H8.500z" />
  </svg>
);

const Caret = ({ up }: { up?: boolean }) => (
  <svg width="12" height="8" viewBox="0 0 12 8" fill="none" stroke="currentColor" strokeWidth={up ? 1.4 : 2} aria-hidden="true">
    <path d={up ? 'm1 6.500 5-5 5 5' : 'm2 2 4 4 4-4'} />
  </svg>
);

/* ---------- data ---------- */

const tabs = [
  { title: 'iTesters Admin', icon: <VercelMark />, divider: true },
  { title: 'Real-time Document Editing', icon: <WhaleMark />, divider: true },
  { title: 'Screen recording tool options', icon: <SiOpenai size={14} />, divider: true },
  { title: 'iTESTER APIs - iTester Workspace', icon: <PostmanMark /> },
  { title: 'Verify your email for iTesters', icon: <GmailMark w={16} h={12} />, active: true },
  { title: '62.72.31.230:8000/public/api', icon: <Globe dim />, divider: true },
];

const bookmarks = [
  { name: 'mern-sep-21/js at o...', icon: <FaGithub size={16} color="#fff" />, w: 138 },
  { name: 'ChatGPT scroll bug...', icon: <Globe />, w: 138 },
  { name: 'Redux DevTools - C...', icon: <StoreMark />, w: 138 },
  { name: 'Listen A Minute: En...', icon: <ClockFaceMark />, w: 138 },
  { name: '(9313) Namaste Jav...', icon: <YoutubeMark />, w: 138 },
  { name: 'Projects · Dashboar...', icon: <GitlabMark />, w: 138 },
  { name: 'JavaScript Examples', icon: <W3Mark />, w: 127 },
];

const folders = [
  { name: 'Inbox', icon: <InboxMark />, count: '6,743', active: true },
  { name: 'Starred', icon: <MdStarOutline size={20} /> },
  { name: 'Snoozed', icon: <MdAccessTime size={20} /> },
  { name: 'Sent', icon: <SentMark /> },
  { name: 'Drafts', icon: <DraftMark />, count: '26', bold: true },
  { name: 'More', icon: <MdExpandMore size={20} /> },
];

type TaskApp = { name: string; icon: React.ReactNode; state?: 'open' | 'active'; badge?: string; badgeBg?: string };

const taskApps: TaskApp[] = [
  { name: 'Start', icon: <WindowsMark /> },
  { name: 'Search', icon: <TaskSearch /> },
  { name: 'Task view', icon: <TaskView /> },
  { name: 'Store', icon: <StoreBag /> },
  { name: 'Copilot', icon: <CopilotMark /> },
  { name: 'Explorer', icon: <ExplorerMark />, state: 'open' },
  { name: 'HP', icon: <HpMark /> },
  { name: 'Help', icon: <HelpMark />, badge: '', badgeBg: '#ffc20e' },
  { name: 'Chrome', icon: <ChromeMark /> },
  { name: 'Edge', icon: <EdgeMark />, state: 'open' },
  { name: 'McAfee', icon: <ShieldMark /> },
  { name: 'Skype', icon: <SkypeMark /> },
  { name: 'Firefox', icon: <FirefoxMark />, state: 'open' },
  { name: 'Code', icon: <VsCodeMark />, state: 'open' },
  { name: 'Teams', icon: <TeamsMark />, state: 'open', badge: '2', badgeBg: '#0078d4' },
  { name: 'Chrome profile', icon: <ChromeMark />, state: 'active', badge: 'P', badgeBg: '#7e57c2' },
  { name: 'Terminal', icon: <TerminalMark />, state: 'open' },
  { name: 'Notepad', icon: <NotepadMark />, state: 'open' },
  { name: 'Media player', icon: <PlayerMark />, state: 'open' },
];

/* ---------- sections ---------- */

const BrowserFrame = () => (
  <Browser>
    <TabStrip>
      <TabSearch aria-label="Search tabs"><Caret /></TabSearch>
      <Tabs>
        {tabs.map((t) => (
          <TabBox key={t.title} $active={t.active} $divider={t.divider}>
            <TabIcon>{t.icon}</TabIcon>
            <TabTitle>{t.title}</TabTitle>
            <IconButton $w={16} $h={16} aria-label="Close tab"><MdClose size={14} /></IconButton>
          </TabBox>
        ))}
      </Tabs>
      <IconButton $w={36} $h={40} aria-label="New tab"><MdAdd size={18} /></IconButton>
      <WindowControls>
        <IconButton $w={46} $h={40} aria-label="Minimize">
          <svg width="10" height="10" viewBox="0 0 10 10" stroke="currentColor"><path d="M0 5.500h10" /></svg>
        </IconButton>
        <IconButton $w={46} $h={40} aria-label="Restore">
          <svg width="10" height="10" viewBox="0 0 10 10" fill="none" stroke="currentColor">
            <rect x=".5" y="2.500" width="7" height="7" rx="1" /><path d="M2.500.500h5a2 2 0 0 1 2 2v5" />
          </svg>
        </IconButton>
        <IconButton $w={46} $h={40} aria-label="Close">
          <svg width="10" height="10" viewBox="0 0 10 10" stroke="currentColor" strokeWidth="1.200"><path d="m0 0 10 10M10 0 0 10" /></svg>
        </IconButton>
      </WindowControls>
    </TabStrip>
    <Toolbar>
      <AddressRow>
        <IconButton aria-label="Back"><MdArrowBack size={17} /></IconButton>
        <IconButton aria-label="Forward"><MdArrowForward size={17} color="#7c7c7c" /></IconButton>
        <IconButton aria-label="Reload"><MdRefresh size={18} /></IconButton>
        <AddressBar>
          <SiteInfo aria-label="Site information"><SiteSettings /></SiteInfo>
          <Url href="#"><b>mail.google.com</b>/mail/u/0/?tab=rm&amp;ogbl#inbox/FMfcgzQcpnPXKhQbmDtKNDggMVPCKrQZ</Url>
          <IconButton $w={36} aria-label="Lens"><LensMark /></IconButton>
          <IconButton aria-label="Bookmark"><MdStarOutline size={20} /></IconButton>
        </AddressBar>
        <IconButton aria-label="React tools"><SiReact size={15} color="#e3e3e3" /></IconButton>
        <IconButton aria-label="Screenshot"><MdPhotoCamera size={18} color="#a9a9a9" /></IconButton>
        <IconButton aria-label="Extensions"><PuzzleMark /></IconButton>
        <VRule $gap={4} />
        <IconButton aria-label="Downloads"><MdOutlineFileDownload size={22} /></IconButton>
        <IconButton aria-label="Profile"><Initial $size={20} $font={11}>P</Initial></IconButton>
        <ErrorButton>Error <MdMoreVert size={18} /></ErrorButton>
      </AddressRow>
      <BookmarkRow>
        <AppsMark />
        <VRule $gap={14} />
        <BookmarkList>
          {bookmarks.map((b) => (
            <Bookmark key={b.name} href="#" $w={b.w}>{b.icon}<span>{b.name}</span></Bookmark>
          ))}
          <Bookmark href="#" aria-label="Site"><Globe /></Bookmark>
        </BookmarkList>
        <BookmarkEnd>
          <svg width="12" height="10" viewBox="0 0 12 10" fill="none" stroke="currentColor" strokeWidth="1.500"><path d="m1 1 4 4-4 4M6 1l4 4-4 4" /></svg>
          <VRule />
          <Bookmark href="#"><MdOutlineFolder size={18} />All Bookmarks</Bookmark>
        </BookmarkEnd>
      </BookmarkRow>
    </Toolbar>
  </Browser>
);

const Message = () => (
  <Conversation>
    <MessageBar>
      <IconButton aria-label="Back to inbox"><MdArrowBack size={17} /></IconButton>
      <ActionGroup $ml={28}>
        <IconButton aria-label="Archive"><MdOutlineArchive size={18} /></IconButton>
        <IconButton aria-label="Report spam"><MdOutlineReport size={18} /></IconButton>
        <IconButton aria-label="Delete"><MdDeleteOutline size={20} /></IconButton>
      </ActionGroup>
      <BarRule />
      <ActionGroup $ml={16}>
        <IconButton aria-label="Mark as unread"><UnreadMark /></IconButton>
        <IconButton aria-label="Move to"><MdOutlineDriveFileMove size={20} /></IconButton>
      </ActionGroup>
      <ActionGroup $ml={12}>
        <IconButton aria-label="More"><MdMoreVert size={18} /></IconButton>
      </ActionGroup>
      <Pager>
        <span>1 of 7,090</span>
        <ActionGroup $ml={16}>
          <IconButton aria-label="Newer"><MdChevronLeft size={20} color="#b5b7ba" /></IconButton>
        </ActionGroup>
        <ActionGroup $ml={12}>
          <IconButton aria-label="Older"><MdChevronRight size={20} color="#303134" /></IconButton>
        </ActionGroup>
        <InputTools aria-label="Input tools"><KeyboardMark /><DropMark /></InputTools>
      </Pager>
    </MessageBar>
    <MessagePane>
      <MessageCanvas>
        <Letter>
          <Banner>
            <CompanyMark />
            <span>Software | Security | Testing</span>
          </Banner>
          <LetterBody>
            <h1>Verify Your Email Address</h1>
            <Lead>Just one more step to complete your registration!</Lead>
            <Greeting>
              Hi <strong>priyanka gour</strong>, Thank you for signing up. Please verify your email address by clicking the button below.
            </Greeting>
            <VerifyLink href="#">Verify Email</VerifyLink>
            <p>If you did not create an account, no further action is required.</p>
            <p>This verification link will expire in 24 hours.</p>
          </LetterBody>
          <LetterFooter />
        </Letter>
      </MessageCanvas>
      <ScrollTrack><ScrollThumb /></ScrollTrack>
    </MessagePane>
  </Conversation>
);

export default function App() {
  return (
    <Screen>
      <GlobalStyle />
      <BrowserFrame />
      <Mail>
        <MailHeader>
          <Brand>
            <IconButton aria-label="Main menu"><MdMenu size={24} color="#5f6368" /></IconButton>
            <Wordmark href="#"><GmailMark w={30} h={22} />Gmail</Wordmark>
          </Brand>
          <SearchBox>
            <IconButton aria-label="Search"><MdSearch size={24} /></IconButton>
            <SearchInput placeholder="Search mail" aria-label="Search mail" />
            <IconButton aria-label="Search options"><MdTune size={24} /></IconButton>
          </SearchBox>
          <HeaderActions>
            <IconButton $w={42} aria-label="Support"><MdHelpOutline size={24} /></IconButton>
            <IconButton $w={42} aria-label="Settings"><Gear /></IconButton>
            <IconButton $w={40} aria-label="Gemini"><Sparkle /></IconButton>
            <IconButton $w={40} aria-label="Google apps"><GridDots /></IconButton>
            <IconButton $w={50} $h={32} aria-label="Account"><Initial $size={32} $font={18}>P</Initial></IconButton>
          </HeaderActions>
        </MailHeader>
        <MailBody>
          <Sidebar>
            <Compose><Pencil />Compose</Compose>
            <nav>
              {folders.map((f) => (
                <Folder key={f.name} href="#" $active={f.active} $bold={f.bold}>
                  {f.icon}
                  <FolderName>{f.name}</FolderName>
                  {f.count && <Count $strong={f.active}>{f.count}</Count>}
                </Folder>
              ))}
            </nav>
            <LabelsHead>
              <h2>Labels</h2>
              <IconButton $w={20} $h={20} aria-label="Create label"><MdAdd size={20} /></IconButton>
            </LabelsHead>
            <Upgrade>Upgrade<MdArrowForward size={24} /></Upgrade>
          </Sidebar>
          <Message />
          <AddonRail>
            <AddonButton aria-label="Calendar"><CalendarMark /></AddonButton>
            <AddonButton aria-label="Keep"><KeepMark /></AddonButton>
            <AddonButton aria-label="Tasks"><TasksMark /></AddonButton>
            <AddonButton aria-label="Contacts"><ContactsMark /></AddonButton>
            <RailRule />
            <AddonButton aria-label="Get add-ons"><MdAdd size={24} color="#000" /></AddonButton>
            <RailToggle aria-label="Hide side panel"><MdChevronRight size={20} /></RailToggle>
          </AddonRail>
        </MailBody>
        <Grip><i /><i /></Grip>
        <Recorder aria-label="Record"><Burst /></Recorder>
      </Mail>
      <Taskbar>
        <Widgets>
          <Weather aria-label="Weather"><WeatherMark /><Badge $bg="#c42b1c" $right={0}>9+</Badge></Weather>
        </Widgets>
        <Apps>
          {taskApps.map((a) => (
            <AppButton key={a.name} aria-label={a.name} $state={a.state}>
              {a.icon}
              {a.badgeBg && <Badge $bg={a.badgeBg}>{a.badge}</Badge>}
            </AppButton>
          ))}
        </Apps>
        <Tray>
          <IconButton $w={32} aria-label="Hidden icons"><Caret up /></IconButton>
          <IconButton $w={32} aria-label="OneDrive"><CloudOff /></IconButton>
          <IconButton $w={32} aria-label="Updates"><SyncMark /></IconButton>
          <TrayText $align="center" $w={44}>ENG<br />US</TrayText>
          <IconButton $w={32} aria-label="Network"><WifiMark /></IconButton>
          <IconButton $w={16} aria-label="Volume"><SpeakerMark /></IconButton>
          <IconButton $w={32} aria-label="Battery"><BatteryMark /></IconButton>
          <TrayText $align="right" $w={72}>18:11<br />18-09-2025</TrayText>
        </Tray>
      </Taskbar>
    </Screen>
  );
}
